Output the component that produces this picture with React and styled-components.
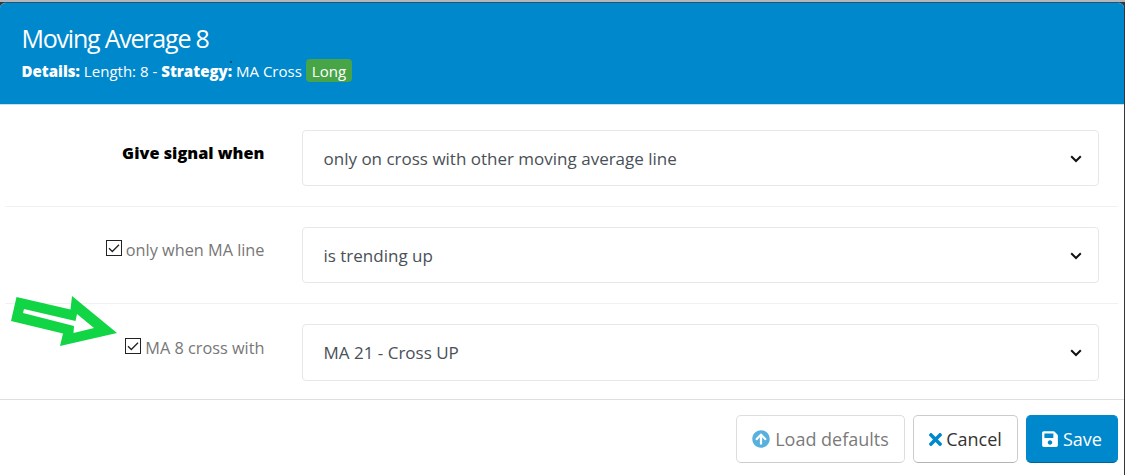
import React from "react";
import styled, { createGlobalStyle } from "styled-components";
import { FaArrowCircleUp, FaSave, FaTimes } from "react-icons/fa";

const PRIMARY = "#0088cc";

const ROWS = [
  { label: "Give signal when", value: "only on cross with other moving average line" },
  { label: "only when MA line", value: "is trending up", checkable: true },
  { label: "MA 8 cross with", value: "MA 21 - Cross UP", checkable: true },
];

function Checkbox() {
  return (
    <Box viewBox="0 0 16 16">
      <rect x="0.5" y="0.5" width="15" height="15" fill="#fff" stroke="#222" />
      <path d="M3 8.2 L6.3 11.5 L13 4.8" fill="none" stroke="#222" strokeWidth="1.3" />
    </Box>
  );
}

function Pointer() {
  return (
    <Arrow viewBox="0 0 108 54">
      <path
        d="M6.5 4 L60.5 16.5 L62 3 L107 40 L50 53 L53 40.5 L1 28 Z M14 16 L13 20 L64 33 L63.5 40 L84 35 L67 21 L65.5 28 Z"
        fill="#11d544"
        fillRule="evenodd"
      />
    </Arrow>
  );
}

function App() {
  return (
    <Backdrop>
      <GlobalStyle />
      <Modal>
        <Header>
          <Title>Moving Average 8</Title>
          <Details>
            <b>Details:</b> Length: 8 - <b>Strategy:</b> MA Cross <Badge>Long</Badge>
            <Speck />
          </Details>
        </Header>
        <Body>
          {ROWS.map(({ label, value, checkable }) => (
            <Row key={label}>
              <Label $strong={!checkable}>
                {checkable && <Checkbox />}
                {label}
              </Label>
              <Select>
                {value}
                <Chevron viewBox="0 0 12 8">
                  <path d="M1.2 1.3 L6 6 L10.8 1.3" fill="none" stroke="#111" strokeWidth="2" />
                </Chevron>
              </Select>
            </Row>
          ))}
        </Body>
        <Footer>
          <Button $width={169} $gap={5} $muted>
            <FaArrowCircleUp size={18} />
            Load defaults
          </Button>
          <Button $width={105} $gap={1} $shift={3}>
            <FaTimes size={19} />
            Cancel
          </Button>
          <Button $width={92} $gap={4} $shift={1} $primary>
            <FaSave size={18} />
            Save
          </Button>
        </Footer>
      </Modal>
      <Pointer />
    </Backdrop>
  );
}

const GlobalStyle = createGlobalStyle`
  * {
    box-sizing: border-box;
  }

  body {
    margin: 0;
    overflow: hidden;
    font-family: "Open Sans", "Liberation Sans", sans-serif;
  }
`;

const Backdrop = styled.div`
  position: relative;
  height: 475px;
  padding-right: 1px;
  border-top: 2px solid #b4b6b8;
  background: #33363b;
`;

const Modal = styled.div`
  height: 473px;
  border-top: 1px solid #1d5578;
  border-radius: 6px 6px 0 0;
  overflow: hidden;
  background: #fff;
`;

const Header = styled.header`
  height: 102px;
  padding: 18px 22px 0 21.5px;
  border-bottom: 1px solid #c5e2f2;
  background: ${PRIMARY};
  color: #fff;
`;

const Title = styled.h4`
  margin: 0;
  font-size: 25px;
  font-weight: 400;
  line-height: 34px;
  letter-spacing: -1.22px;
`;

const Details = styled.div`
  position: relative;
  margin-top: 4px;
  font-size: 15.04px;
  line-height: 24px;
  white-space: nowrap;

  b {
    font-weight: 800;
  }
`;

const Badge = styled.span`
  display: inline-block;
  height: 23px;
  padding: 0 6px;
  border-radius: 4px;
  background: #47a447;
  line-height: 24px;
`;

const Speck = styled.i`
  position: absolute;
  left: 208px;
  top: 2px;
  width: 2px;
  height: 2px;
  border-radius: 1px;
  background: #073a5c;
`;

const Body = styled.div`
  height: 294px;
  padding: 5px 6px 0 5px;
`;

const Select = styled.div`
  display: flex;
  justify-content: space-between;
  align-items: center;
  height: 56px;
  padding: 1px 16px 0 20.5px;
  border: 1px solid #e5e7e9;
  border-radius: 4px;
  color: #495057;
  font-size: 17px;
`;

const Row = styled.div`
  display: grid;
  grid-template-columns: 259.5px 797px;
  column-gap: 37.5px;
  height: 97px;
  padding-top: 20px;

  &:first-child {
    height: 96px;
  }

  & + & {
    border-top: 1px solid #f1f1f1;
  }

  &:last-child ${Select} {
    height: 57px;
    padding-bottom: 1px;
  }
`;

const Label = styled.label`
  display: flex;
  justify-content: flex-end;
  align-items: center;
  height: 46px;
  color: ${({ $strong }) => ($strong ? "#000" : "#777")};
  font-size: 16.3px;
  font-weight: ${({ $strong }) => ($strong ? 800 : 400)};
  white-space: nowrap;

  ${Row}:last-child & {
    height: 48px;
  }
`;

const Box = styled.svg`
  width: 16px;
  height: 16px;
  margin: -4px 4px 0 0;
`;

const Chevron = styled.svg`
  width: 12px;
  height: 8px;
`;

const Footer = styled.footer`
  display: flex;
  justify-content: flex-end;
  gap: 8px;
  height: 76px;
  padding: 15px 6px 0 0;
  border-top: 1px solid #dedede;
`;

const Button = styled.button`
  display: flex;
  justify-content: center;
  align-items: center;
  gap: ${({ $gap }) => $gap}px;
  width: ${({ $width }) => $width}px;
  height: 48px;
  padding: 0 ${({ $shift = 0 }) => $shift}px 0 0;
  border: 1px solid ${({ $primary }) => ($primary ? PRIMARY : "#ccc")};
  border-bottom-color: ${({ $primary }) => ($primary ? "#006699" : "#b3b3b3")};
  border-radius: 5px;
  background: ${({ $primary }) => ($primary ? PRIMARY : "#fff")};
  color: ${({ $primary }) => ($primary ? "#fff" : "#333")};
  font-family: inherit;
  font-size: 18px;
  white-space: nowrap;
  opacity: ${({ $muted }) => ($muted ? 0.65 : 1)};

  svg {
    color: ${({ $primary }) => ($primary ? "#fff" : PRIMARY)};
  }
`;

const Arrow = styled.svg`
  position: absolute;
  left: 10px;
  top: 291px;
  width: 108px;
  height: 54px;
`;

export default App;
